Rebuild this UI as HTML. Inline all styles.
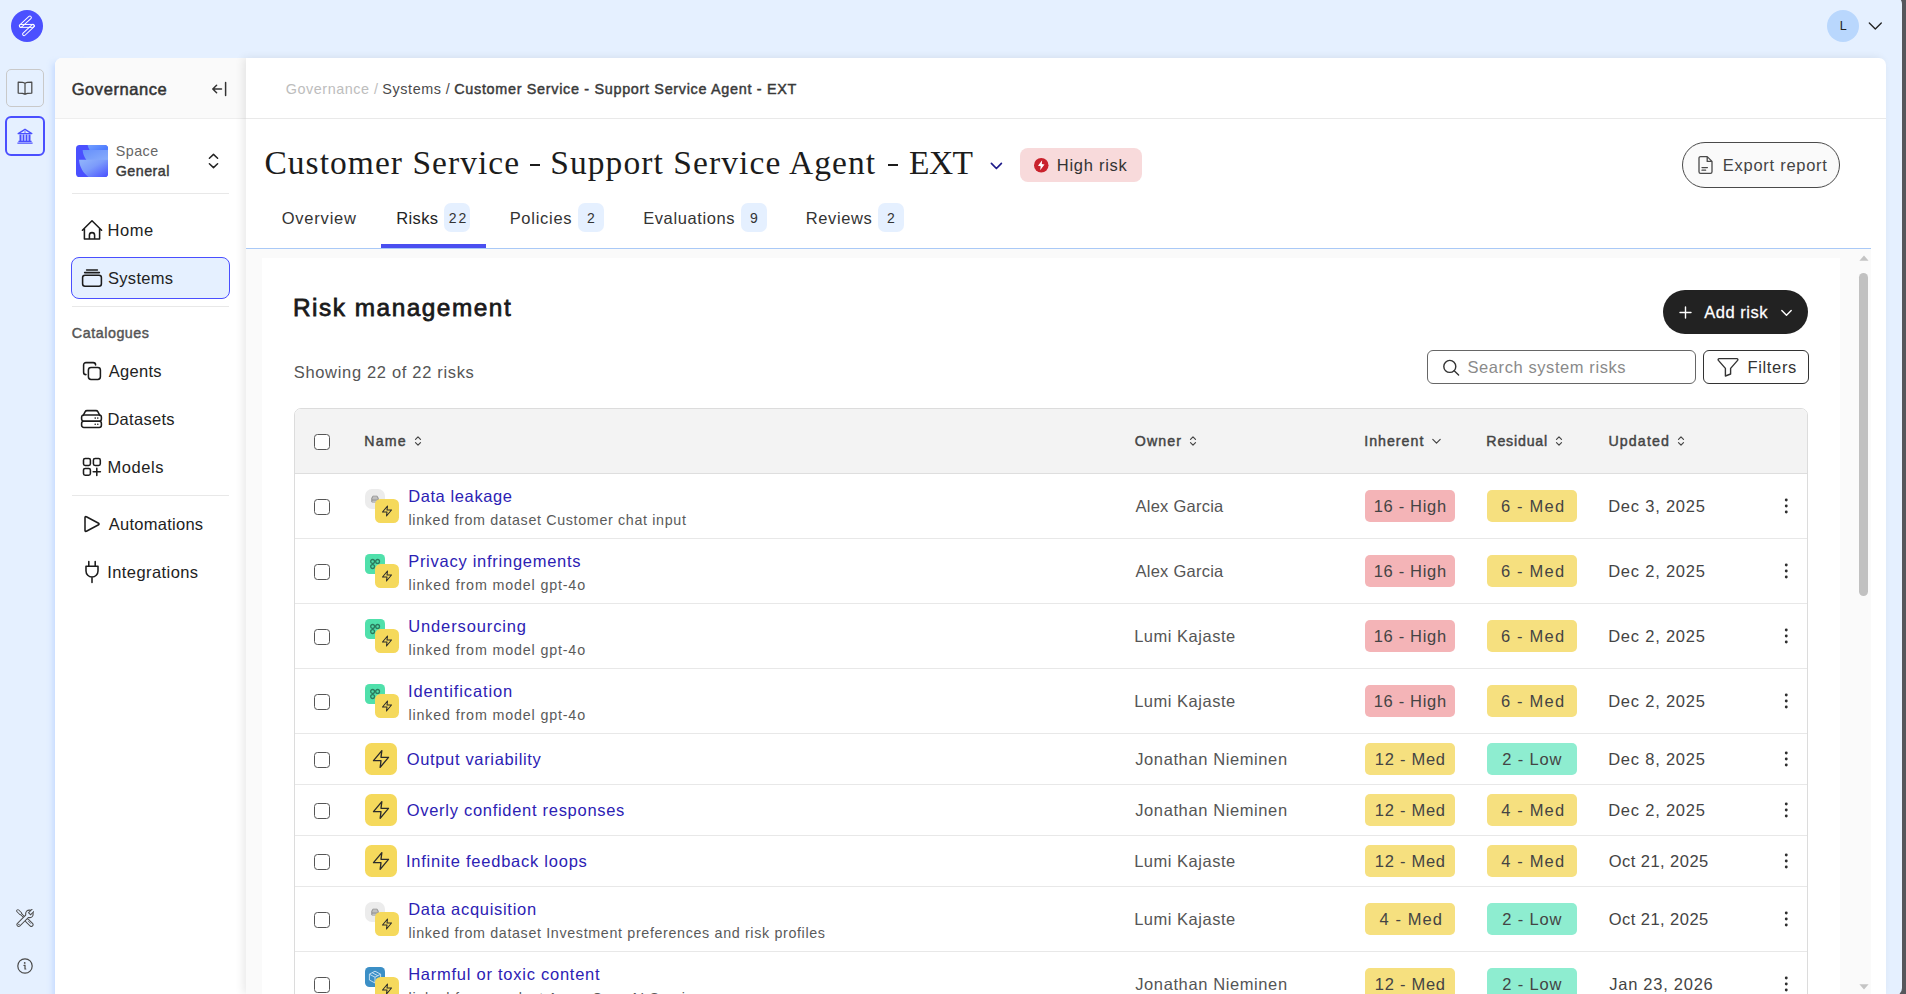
<!DOCTYPE html>
<html lang="en"><head><meta charset="utf-8"><title>Risk management</title>
<style>

html,body{margin:0;padding:0;overflow:hidden}

body{width:1906px;height:994px;overflow:hidden;position:relative;background:#e5f0ff;font-family:"Liberation Sans", sans-serif;}

div,span,svg{position:absolute;box-sizing:border-box}

.t{white-space:nowrap;line-height:1;height:1em}

.sf{font-family:"Liberation Serif", serif}

.cb{width:16px;height:16px;border:1.2px solid #555;border-radius:3.5px;background:#fff}

.hl{height:1px;background:#e8e8e8}

.bdg{height:31.3px;border-radius:5px}

.pk{background:#f4b4b7}.yl{background:#f6e07f}.gn{background:#8eedd0}

.tb{background:#e5f0ff;border-radius:7px;height:29px;width:26px;top:203px}

.yb{background:#f5d95c}

</style></head><body>
<div style="left:0;top:0;width:1906px;height:994px;overflow:hidden">
<div style="left:1886px;top:0;width:20px;height:994px;background:#56575c"></div>
<div style="left:1880px;top:-4px;width:22px;height:1000px;background:#e5f0ff;border-radius:0 8px 8px 0"></div>
<svg style="position:absolute;left:11px;top:10px" width="32" height="32" viewBox="0 0 32 32" ><circle cx="16" cy="16" r="16" fill="#4b50ff"/><rect x="17.45" y="6.05" width="15.28" height="2.90" rx="1.45" fill="none" stroke="#fff" stroke-width="1" transform="rotate(137.29 18.90 7.50)"/><rect x="8.35" y="14.45" width="15.00" height="2.90" rx="1.45" fill="none" stroke="#fff" stroke-width="1" transform="rotate(0.00 9.80 15.90)"/><rect x="20.45" y="14.45" width="15.03" height="2.90" rx="1.45" fill="none" stroke="#fff" stroke-width="1" transform="rotate(136.84 21.90 15.90)"/></svg>
<div style="left:6px;top:69px;width:38px;height:38px;border:1px solid #c9c9c9;border-radius:5px"></div>
<svg style="position:absolute;left:17px;top:80px" width="16" height="16" viewBox="0 0 16 16" ><path d="M8 3.4 C6.6 2.3 4.2 2.2 1.2 2.2 V13 C4.2 13 6.6 13.1 8 14.3 C9.4 13.1 11.8 13 14.8 13 V2.2 C11.8 2.2 9.4 2.3 8 3.4 V14.2" fill="none" stroke="#4a4a4a" stroke-width="1.25" stroke-linejoin="round"/></svg>
<div style="left:5px;top:116px;width:40px;height:40px;border:2px solid #4a4fff;border-radius:6px"></div>
<svg style="position:absolute;left:17px;top:128px" width="16" height="16" viewBox="0 0 16 16" ><path d="M8 1.3 L1.2 5.6 H14.8 Z" fill="none" stroke="#4a4fff" stroke-width="1.4" stroke-linejoin="round"/><circle cx="8" cy="4.1" r="0.75" fill="#4a4fff"/><path d="M2.5 6.6 H4.5 V13 H2.5Z M5.6 6.6 H7.4 V13 H5.6Z M8.6 6.6 H10.4 V13 H8.6Z M11.5 6.6 H13.5 V13 H11.5Z" fill="#4a4fff"/><path d="M1.4 12.8 H14.6 V14 H1.4Z M0.4 14.6 H15.6 V15.8 H0.4Z" fill="#4a4fff"/></svg>
<svg style="position:absolute;left:16px;top:909px" width="18.4" height="18.4" viewBox="0 0 18.4 18.4" ><path d="M1.9 1.9 L4.4 4.4" stroke="#4d4d4d" stroke-width="3.3" stroke-linecap="round" fill="none"/><path d="M4.4 4.4 L9 9" stroke="#4d4d4d" stroke-width="2.3" stroke-linecap="butt" fill="none"/><path d="M11.2 11.6 L15.3 15.7" stroke="#4d4d4d" stroke-width="4.5" stroke-linecap="round" fill="none"/><path d="M1.9 1.9 L4.4 4.4" stroke="#e5f0ff" stroke-width="1.5" stroke-linecap="round" fill="none"/><path d="M4.4 4.4 L9 9" stroke="#e5f0ff" stroke-width="0.7" stroke-linecap="butt" fill="none"/><path d="M11.2 11.6 L15.3 15.7" stroke="#e5f0ff" stroke-width="2.6" stroke-linecap="round" fill="none"/><path d="M12.4 12.2 L14.6 14.4" stroke="#4d4d4d" stroke-width="0.8" stroke-linecap="round" fill="none"/><path d="M2.7 15.6 L10.6 7.7" stroke="#4d4d4d" stroke-width="4.5" stroke-linecap="round" fill="none"/><circle cx="13.4" cy="4.9" r="4.3" fill="#4d4d4d"/><path d="M2.7 15.6 L12 6.3" stroke="#e5f0ff" stroke-width="2.6" stroke-linecap="round" fill="none"/><circle cx="13.4" cy="4.9" r="3.2" fill="#e5f0ff"/><path d="M13.2 5.1 L18.4 -0.1" stroke="#4d4d4d" stroke-width="3.9" stroke-linecap="butt" fill="none"/><path d="M13.9 4.4 L18.6 -0.3" stroke="#e5f0ff" stroke-width="1.9" stroke-linecap="butt" fill="none"/><circle cx="2.9" cy="15.4" r="0.7" fill="#4d4d4d"/></svg>
<svg style="position:absolute;left:17px;top:958px" width="16" height="16" viewBox="0 0 16 16" ><circle cx="8" cy="8" r="7.2" fill="none" stroke="#4a4a4a" stroke-width="1.2"/><circle cx="7.7" cy="4.9" r="0.9" fill="#4a4a4a"/><path d="M7 7.4 H8 V11 H8.8" fill="none" stroke="#4a4a4a" stroke-width="1.2" stroke-linecap="round"/></svg>
<div style="left:55px;top:63px;width:30px;height:940px;box-shadow:-2px 0 6px rgba(150,185,255,.42)"></div><div style="left:55px;top:58px;width:200px;height:936px;background:#fff;border-radius:7px 0 0 0"></div>
<div style="left:55px;top:58px;width:191px;height:60px;background:#fafafa;border-radius:7px 0 0 0"></div>
<div class="hl" style="left:55px;top:118px;width:191px;background:#eee"></div>
<svg style="position:absolute;left:211px;top:81px" width="17" height="16" viewBox="0 0 17 16" ><path d="M10.5 8 H2 M5.6 4.2 L1.8 8 L5.6 11.8 M14.6 1.4 V14.6" fill="none" stroke="#333" stroke-width="1.5" stroke-linecap="round" stroke-linejoin="round"/></svg>
<svg style="position:absolute;left:76px;top:145px" width="32" height="32" viewBox="0 0 32 32" ><defs><linearGradient id="g1" x1="0" y1="0" x2="1" y2="0.4"><stop offset="0" stop-color="#74a0ff"/><stop offset="1" stop-color="#4f7dff"/></linearGradient><linearGradient id="g2" x1="0" y1="0" x2="1" y2="1"><stop offset="0" stop-color="#6790fb"/><stop offset="1" stop-color="#88acfb"/></linearGradient><linearGradient id="g3" x1="0" y1="0" x2="1" y2="1"><stop offset="0" stop-color="#92b6fb"/><stop offset="0.45" stop-color="#7c9bfb"/><stop offset="1" stop-color="#4850ff"/></linearGradient><clipPath id="sc"><rect width="32" height="32" rx="3.6"/></clipPath></defs><g clip-path="url(#sc)"><rect width="32" height="32" fill="#4a50ff"/><path d="M11.6 0 H32 V5 H13.6 C12.6 3.4 12 1.8 11.6 0Z" fill="url(#g1)"/><path d="M6.6 4.9 H32 V14.9 H10.4 C8.2 12 6.9 8.6 6.6 4.9Z" fill="url(#g2)"/><path d="M3 14.8 H32 V32 H12.4 C7 28 3.6 22 3 14.8Z" fill="url(#g3)"/></g></svg>
<svg style="position:absolute;left:208px;top:153px" width="11" height="16" viewBox="0 0 11 16" ><path d="M1.4 5.2 L5.5 1.4 L9.6 5.2 M1.4 10.8 L5.5 14.6 L9.6 10.8" fill="none" stroke="#222" stroke-width="1.5" stroke-linecap="round" stroke-linejoin="round"/></svg>
<div class="hl" style="left:72px;top:193px;width:157px"></div>
<svg style="position:absolute;left:81px;top:219px" width="22" height="22" viewBox="0 0 22 22" ><path d="M1.4 11.2 L11 1.8 L20.6 11.2 M3.4 9.6 V20 H18.6 V9.6 M8.4 20 V16.2 A2.6 2.6 0 0 1 13.6 16.2 V20" fill="none" stroke="#1c1c1c" stroke-width="1.55" stroke-linecap="round" stroke-linejoin="round"/></svg>
<div style="left:71px;top:257px;width:159px;height:42px;background:#e5f0ff;border:1px solid #4a4fff;border-radius:8px"></div>
<svg style="position:absolute;left:81px;top:268px" width="22" height="20" viewBox="0 0 22 20" ><rect x="1.6" y="7.2" width="18.8" height="11" rx="2.4" fill="none" stroke="#1c1c1c" stroke-width="1.55" stroke-linecap="round" stroke-linejoin="round"/><path d="M3.6 4.6 H18.4 M5.6 1.9 H16.4" fill="none" stroke="#1c1c1c" stroke-width="1.55" stroke-linecap="round" stroke-linejoin="round"/></svg>
<div class="hl" style="left:72px;top:306px;width:157px"></div>
<svg style="position:absolute;left:82px;top:361px" width="20" height="20" viewBox="0 0 20 20" ><rect x="6.4" y="6.4" width="12" height="12" rx="2.6" fill="none" stroke="#1c1c1c" stroke-width="1.55" stroke-linecap="round" stroke-linejoin="round"/><path d="M4 13.6 A2.4 2.4 0 0 1 1.6 11.2 V4 A2.4 2.4 0 0 1 4 1.6 H11.2 A2.4 2.4 0 0 1 13.6 4" fill="none" stroke="#1c1c1c" stroke-width="1.55" stroke-linecap="round" stroke-linejoin="round"/></svg>
<svg style="position:absolute;left:80px;top:409px" width="23" height="20" viewBox="0 0 23 20" ><rect x="1.6" y="6" width="19.8" height="6.2" rx="2.2" fill="none" stroke="#1c1c1c" stroke-width="1.55" stroke-linecap="round" stroke-linejoin="round"/><rect x="1.6" y="12.2" width="19.8" height="6.2" rx="2.2" fill="none" stroke="#1c1c1c" stroke-width="1.55" stroke-linecap="round" stroke-linejoin="round"/><path d="M3.2 6.4 L5.2 2.6 C5.6 1.8 6.2 1.6 7 1.6 H16 C16.8 1.6 17.4 1.8 17.8 2.6 L19.8 6.4" fill="none" stroke="#1c1c1c" stroke-width="1.55" stroke-linecap="round" stroke-linejoin="round"/><circle cx="15.2" cy="9.1" r="0.8" fill="#1c1c1c"/><circle cx="17.8" cy="9.1" r="0.8" fill="#1c1c1c"/><circle cx="15.2" cy="15.3" r="0.8" fill="#1c1c1c"/><circle cx="17.8" cy="15.3" r="0.8" fill="#1c1c1c"/></svg>
<svg style="position:absolute;left:82px;top:457px" width="20" height="20" viewBox="0 0 20 20" ><rect x="1.5" y="1.5" width="6.9" height="6.9" rx="1.7" fill="none" stroke="#1c1c1c" stroke-width="1.55" stroke-linecap="round" stroke-linejoin="round"/><rect x="11.4" y="1.5" width="6.9" height="6.9" rx="1.7" fill="none" stroke="#1c1c1c" stroke-width="1.55" stroke-linecap="round" stroke-linejoin="round"/><rect x="1.5" y="11.4" width="6.9" height="6.9" rx="1.7" fill="none" stroke="#1c1c1c" stroke-width="1.55" stroke-linecap="round" stroke-linejoin="round"/><path d="M14.8 11.2 V18.4 M11.2 14.8 H18.4" fill="none" stroke="#1c1c1c" stroke-width="1.55" stroke-linecap="round" stroke-linejoin="round"/></svg>
<div class="hl" style="left:72px;top:495px;width:157px"></div>
<svg style="position:absolute;left:83px;top:515px" width="18" height="18" viewBox="0 0 18 18" ><path d="M2 2.6 C2 1.8 2.8 1.4 3.4 1.8 L15.6 8.2 C16.2 8.6 16.2 9.4 15.6 9.8 L3.4 16.2 C2.8 16.6 2 16.2 2 15.4 Z" fill="none" stroke="#1c1c1c" stroke-width="1.55" stroke-linecap="round" stroke-linejoin="round"/></svg>
<svg style="position:absolute;left:84px;top:560px" width="16" height="24" viewBox="0 0 16 24" ><path d="M4.8 1.4 V6.2 M11.2 1.4 V6.2 M2 6.2 H14 V11 A6 6 0 0 1 2 11 Z M8 17 V22.4" fill="none" stroke="#1c1c1c" stroke-width="1.55" stroke-linecap="round" stroke-linejoin="round"/></svg>
<div style="left:246px;top:58px;width:1640px;height:936px;background:#fff;border-radius:0 7px 0 0;box-shadow:-3px 0 8px rgba(0,0,0,.085)"></div>
<div class="hl" style="left:246px;top:118px;width:1640px;background:#e9e9e9"></div>
<div style="left:529.5px;top:164.3px;width:10.5px;height:1.5px;background:#1c1c1c"></div><div style="left:887.5px;top:164.3px;width:10.5px;height:1.5px;background:#1c1c1c"></div>
<svg style="position:absolute;left:989px;top:160px" width="16" height="12" viewBox="0 0 16 12" ><path d="M2.4 3.4 L7.4 8.5 L12.4 3.4" fill="none" stroke="#1e1b8a" stroke-width="1.7" stroke-linecap="round" stroke-linejoin="round"/></svg>
<div style="left:1020px;top:148px;width:122px;height:34px;background:#f8dadb;border-radius:8px"></div>
<svg style="position:absolute;left:1034px;top:158px" width="14.5" height="14.5" viewBox="0 0 16 16" ><circle cx="8" cy="8" r="8" fill="#c9222c"/><path d="M9 2.6 L4.4 8.6 L7.4 9.2 L6.8 13.4 L11.6 7.2 L8.6 6.6 Z" fill="#fff"/></svg>
<div style="left:1682px;top:142px;width:158px;height:46px;background:#fafafa;border:1px solid #4a4a4a;border-radius:23px"></div>
<svg style="position:absolute;left:1697px;top:155px" width="17" height="20" viewBox="0 0 17 20" ><path d="M10.2 1.6 H3.6 A1.6 1.6 0 0 0 2 3.2 V16.8 A1.6 1.6 0 0 0 3.6 18.4 H13.4 A1.6 1.6 0 0 0 15 16.8 V6.4 Z M10.2 1.6 V6.4 H15 M5 12.6 H10.4 M5 15.2 H8.6" fill="none" stroke="#4a4a4a" stroke-width="1.3" stroke-linejoin="round" stroke-linecap="round"/></svg>
<div class="tb" style="left:444px"></div>
<div class="tb" style="left:578px"></div>
<div class="tb" style="left:741px"></div>
<div class="tb" style="left:878px"></div>
<div style="left:246px;top:248px;width:1625px;height:1px;background:#a9c9f7"></div>
<div style="left:381px;top:244px;width:105px;height:4px;background:#4a4ff0"></div>
<div style="left:246px;top:249px;width:1625px;height:745px;background:#fafafa"></div>
<div style="left:262px;top:258px;width:1578px;height:736px;background:#fff"></div>
<svg style="position:absolute;left:1859px;top:255px" width="10" height="6" viewBox="0 0 10 6" ><path d="M5 0.4 L9.6 5.8 H0.4 Z" fill="#c4c4c4"/></svg>
<div style="left:1859px;top:273px;width:9px;height:323px;background:#c1c1c1;border-radius:4.5px"></div>
<svg style="position:absolute;left:1859px;top:984px" width="10" height="6" viewBox="0 0 10 6" ><path d="M0.4 0.2 H9.6 L5 5.6 Z" fill="#c4c4c4"/></svg>
<div style="left:1827px;top:10px;width:32.4px;height:32px;border-radius:16.2px;background:#b9d7fd"></div>
<svg style="position:absolute;left:1868px;top:21px" width="15" height="10" viewBox="0 0 15 10" ><path d="M1.3 2 L7.3 8 L13.3 2" fill="none" stroke="#222" stroke-width="1.3" stroke-linecap="round" stroke-linejoin="round"/></svg>
<div style="left:1663px;top:290px;width:145px;height:44px;background:#222;border-radius:22px"></div>
<svg style="position:absolute;left:1679px;top:306px" width="13" height="13" viewBox="0 0 13 13" ><path d="M6.5 1 V12 M1 6.5 H12" fill="none" stroke="#fff" stroke-width="1.4" stroke-linecap="round"/></svg>
<svg style="position:absolute;left:1780px;top:308px" width="13" height="10" viewBox="0 0 13 10" ><path d="M1.8 2.4 L6.5 7.2 L11.2 2.4" fill="none" stroke="#fff" stroke-width="1.4" stroke-linecap="round" stroke-linejoin="round"/></svg>
<div style="left:1427px;top:350px;width:269px;height:34px;border:1px solid #666;border-radius:6px;background:#fff"></div>
<svg style="position:absolute;left:1442px;top:359px" width="18" height="17" viewBox="0 0 18 17" ><circle cx="7.8" cy="7.4" r="6" fill="none" stroke="#333" stroke-width="1.4"/><path d="M12.2 11.8 L16.6 16" stroke="#333" stroke-width="1.4" stroke-linecap="round"/></svg>
<div style="left:1703px;top:350px;width:106px;height:34px;border:1px solid #333;border-radius:6px;background:#fff"></div>
<svg style="position:absolute;left:1717px;top:357px" width="22" height="20" viewBox="0 0 22 20" ><path d="M2.2 1.6 H19.8 C20.8 1.6 21.2 2.6 20.6 3.4 L13.6 11.4 V17 L8.4 19 V11.4 L1.4 3.4 C0.8 2.6 1.2 1.6 2.2 1.6Z" fill="none" stroke="#333" stroke-width="1.4" stroke-linejoin="round"/></svg>
<div style="left:294px;top:408px;width:1514px;height:600px;border:1px solid #dcdcdc;border-radius:7px 7px 0 0;background:#fff"></div>
<div style="left:295px;top:409px;width:1512px;height:64px;background:#f3f3f3;border-radius:6px 6px 0 0"></div>
<div class="hl" style="left:295px;top:473px;width:1512px;background:#dedede"></div>
<div class="cb" style="left:314px;top:434px"></div>
<svg style="position:absolute;left:414.3px;top:435.2px" width="8" height="12" viewBox="0 0 8 12" ><path d="M1.5 4.3 L4 1.8 L6.5 4.3 M1.5 7.7 L4 10.2 L6.5 7.7" fill="none" stroke="#444" stroke-width="1.2" stroke-linecap="round" stroke-linejoin="round"/></svg>
<svg style="position:absolute;left:1189.2px;top:435.2px" width="8" height="12" viewBox="0 0 8 12" ><path d="M1.5 4.3 L4 1.8 L6.5 4.3 M1.5 7.7 L4 10.2 L6.5 7.7" fill="none" stroke="#444" stroke-width="1.2" stroke-linecap="round" stroke-linejoin="round"/></svg>
<svg style="position:absolute;left:1555.4px;top:435.2px" width="8" height="12" viewBox="0 0 8 12" ><path d="M1.5 4.3 L4 1.8 L6.5 4.3 M1.5 7.7 L4 10.2 L6.5 7.7" fill="none" stroke="#444" stroke-width="1.2" stroke-linecap="round" stroke-linejoin="round"/></svg>
<svg style="position:absolute;left:1677.2px;top:435.2px" width="8" height="12" viewBox="0 0 8 12" ><path d="M1.5 4.3 L4 1.8 L6.5 4.3 M1.5 7.7 L4 10.2 L6.5 7.7" fill="none" stroke="#444" stroke-width="1.2" stroke-linecap="round" stroke-linejoin="round"/></svg>
<svg style="position:absolute;left:1431px;top:437px" width="11" height="9" viewBox="0 0 11 9" ><path d="M1.8 2.4 L5.5 6.2 L9.2 2.4" fill="none" stroke="#444" stroke-width="1.2" stroke-linecap="round" stroke-linejoin="round"/></svg>
<div class="hl" style="left:295px;top:538px;width:1512px"></div>
<div class="cb" style="left:314px;top:499px"></div>
<div style="left:365px;top:489px;width:20px;height:20px;border-radius:7px;background:#ececec"></div>
<svg style="position:absolute;left:371px;top:495px" width="8" height="8" viewBox="0 0 8 8" ><path d="M1 3 L1.8 1.2 H6.2 L7 3 M0.8 3 H7.2 V5 H0.8Z M0.8 5 H7.2 V7 H0.8Z" fill="none" stroke="#8a8a8a" stroke-width="0.9" stroke-linejoin="round"/></svg>
<div class="yb" style="left:375px;top:499px;width:24px;height:24px;border-radius:5.5px"></div>
<svg style="position:absolute;left:381.1px;top:504.9px" width="12" height="12" viewBox="0 0 24 24" ><path d="M13 2 L3 14 H12 L11 22 L21 10 H12 Z" fill="none" stroke="#2b2b2b" stroke-width="2.1" stroke-linejoin="round" stroke-linecap="round"/></svg>
<div class="bdg pk" style="left:1365px;top:490.45px;width:90px"></div>
<div class="bdg yl" style="left:1487px;top:490.45px;width:90px"></div>
<svg style="position:absolute;left:1783px;top:497.25px" width="6.5" height="18" viewBox="0 0 6.5 18" ><circle cx="3.25" cy="3" r="1.45" fill="#2e2e2e"/><circle cx="3.25" cy="9" r="1.45" fill="#2e2e2e"/><circle cx="3.25" cy="15" r="1.45" fill="#2e2e2e"/></svg>
<div class="hl" style="left:295px;top:603px;width:1512px"></div>
<div class="cb" style="left:314px;top:564px"></div>
<div style="left:365px;top:554px;width:20px;height:20px;border-radius:4.5px;background:#50e0ab"></div>
<svg style="position:absolute;left:369px;top:558px" width="12" height="12" viewBox="0 0 12 12" ><g fill="none" stroke="#2b7a5d" stroke-width="1.3"><circle cx="3.6" cy="3.4" r="1.9"/><circle cx="8.6" cy="3.4" r="1.9"/><circle cx="3.6" cy="8.6" r="1.9"/><path d="M5.5 3.4 H6.7 M3.6 5.3 V6.7"/></g></svg>
<div class="yb" style="left:375px;top:564px;width:24px;height:24px;border-radius:5.5px"></div>
<svg style="position:absolute;left:381.1px;top:569.9px" width="12" height="12" viewBox="0 0 24 24" ><path d="M13 2 L3 14 H12 L11 22 L21 10 H12 Z" fill="none" stroke="#2b2b2b" stroke-width="2.1" stroke-linejoin="round" stroke-linecap="round"/></svg>
<div class="bdg pk" style="left:1365px;top:555.45px;width:90px"></div>
<div class="bdg yl" style="left:1487px;top:555.45px;width:90px"></div>
<svg style="position:absolute;left:1783px;top:562.25px" width="6.5" height="18" viewBox="0 0 6.5 18" ><circle cx="3.25" cy="3" r="1.45" fill="#2e2e2e"/><circle cx="3.25" cy="9" r="1.45" fill="#2e2e2e"/><circle cx="3.25" cy="15" r="1.45" fill="#2e2e2e"/></svg>
<div class="hl" style="left:295px;top:668px;width:1512px"></div>
<div class="cb" style="left:314px;top:629px"></div>
<div style="left:365px;top:619px;width:20px;height:20px;border-radius:4.5px;background:#50e0ab"></div>
<svg style="position:absolute;left:369px;top:623px" width="12" height="12" viewBox="0 0 12 12" ><g fill="none" stroke="#2b7a5d" stroke-width="1.3"><circle cx="3.6" cy="3.4" r="1.9"/><circle cx="8.6" cy="3.4" r="1.9"/><circle cx="3.6" cy="8.6" r="1.9"/><path d="M5.5 3.4 H6.7 M3.6 5.3 V6.7"/></g></svg>
<div class="yb" style="left:375px;top:629px;width:24px;height:24px;border-radius:5.5px"></div>
<svg style="position:absolute;left:381.1px;top:634.9px" width="12" height="12" viewBox="0 0 24 24" ><path d="M13 2 L3 14 H12 L11 22 L21 10 H12 Z" fill="none" stroke="#2b2b2b" stroke-width="2.1" stroke-linejoin="round" stroke-linecap="round"/></svg>
<div class="bdg pk" style="left:1365px;top:620.45px;width:90px"></div>
<div class="bdg yl" style="left:1487px;top:620.45px;width:90px"></div>
<svg style="position:absolute;left:1783px;top:627.25px" width="6.5" height="18" viewBox="0 0 6.5 18" ><circle cx="3.25" cy="3" r="1.45" fill="#2e2e2e"/><circle cx="3.25" cy="9" r="1.45" fill="#2e2e2e"/><circle cx="3.25" cy="15" r="1.45" fill="#2e2e2e"/></svg>
<div class="hl" style="left:295px;top:733px;width:1512px"></div>
<div class="cb" style="left:314px;top:694px"></div>
<div style="left:365px;top:684px;width:20px;height:20px;border-radius:4.5px;background:#50e0ab"></div>
<svg style="position:absolute;left:369px;top:688px" width="12" height="12" viewBox="0 0 12 12" ><g fill="none" stroke="#2b7a5d" stroke-width="1.3"><circle cx="3.6" cy="3.4" r="1.9"/><circle cx="8.6" cy="3.4" r="1.9"/><circle cx="3.6" cy="8.6" r="1.9"/><path d="M5.5 3.4 H6.7 M3.6 5.3 V6.7"/></g></svg>
<div class="yb" style="left:375px;top:694px;width:24px;height:24px;border-radius:5.5px"></div>
<svg style="position:absolute;left:381.1px;top:699.9px" width="12" height="12" viewBox="0 0 24 24" ><path d="M13 2 L3 14 H12 L11 22 L21 10 H12 Z" fill="none" stroke="#2b2b2b" stroke-width="2.1" stroke-linejoin="round" stroke-linecap="round"/></svg>
<div class="bdg pk" style="left:1365px;top:685.45px;width:90px"></div>
<div class="bdg yl" style="left:1487px;top:685.45px;width:90px"></div>
<svg style="position:absolute;left:1783px;top:692.25px" width="6.5" height="18" viewBox="0 0 6.5 18" ><circle cx="3.25" cy="3" r="1.45" fill="#2e2e2e"/><circle cx="3.25" cy="9" r="1.45" fill="#2e2e2e"/><circle cx="3.25" cy="15" r="1.45" fill="#2e2e2e"/></svg>
<div class="hl" style="left:295px;top:784px;width:1512px"></div>
<div class="cb" style="left:314px;top:752px"></div>
<div class="yb" style="left:365px;top:743px;width:32px;height:32px;border-radius:6.5px"></div>
<svg style="position:absolute;left:371px;top:749px" width="20" height="20" viewBox="0 0 24 24" ><path d="M13 2 L3 14 H12 L11 22 L21 10 H12 Z" fill="none" stroke="#2b2b2b" stroke-width="1.6" stroke-linejoin="round" stroke-linecap="round"/></svg>
<div class="bdg yl" style="left:1365px;top:743.45px;width:90px"></div>
<div class="bdg gn" style="left:1487px;top:743.45px;width:90px"></div>
<svg style="position:absolute;left:1783px;top:750.25px" width="6.5" height="18" viewBox="0 0 6.5 18" ><circle cx="3.25" cy="3" r="1.45" fill="#2e2e2e"/><circle cx="3.25" cy="9" r="1.45" fill="#2e2e2e"/><circle cx="3.25" cy="15" r="1.45" fill="#2e2e2e"/></svg>
<div class="hl" style="left:295px;top:835px;width:1512px"></div>
<div class="cb" style="left:314px;top:803px"></div>
<div class="yb" style="left:365px;top:794px;width:32px;height:32px;border-radius:6.5px"></div>
<svg style="position:absolute;left:371px;top:800px" width="20" height="20" viewBox="0 0 24 24" ><path d="M13 2 L3 14 H12 L11 22 L21 10 H12 Z" fill="none" stroke="#2b2b2b" stroke-width="1.6" stroke-linejoin="round" stroke-linecap="round"/></svg>
<div class="bdg yl" style="left:1365px;top:794.45px;width:90px"></div>
<div class="bdg yl" style="left:1487px;top:794.45px;width:90px"></div>
<svg style="position:absolute;left:1783px;top:801.25px" width="6.5" height="18" viewBox="0 0 6.5 18" ><circle cx="3.25" cy="3" r="1.45" fill="#2e2e2e"/><circle cx="3.25" cy="9" r="1.45" fill="#2e2e2e"/><circle cx="3.25" cy="15" r="1.45" fill="#2e2e2e"/></svg>
<div class="hl" style="left:295px;top:886px;width:1512px"></div>
<div class="cb" style="left:314px;top:854px"></div>
<div class="yb" style="left:365px;top:845px;width:32px;height:32px;border-radius:6.5px"></div>
<svg style="position:absolute;left:371px;top:851px" width="20" height="20" viewBox="0 0 24 24" ><path d="M13 2 L3 14 H12 L11 22 L21 10 H12 Z" fill="none" stroke="#2b2b2b" stroke-width="1.6" stroke-linejoin="round" stroke-linecap="round"/></svg>
<div class="bdg yl" style="left:1365px;top:845.45px;width:90px"></div>
<div class="bdg yl" style="left:1487px;top:845.45px;width:90px"></div>
<svg style="position:absolute;left:1783px;top:852.25px" width="6.5" height="18" viewBox="0 0 6.5 18" ><circle cx="3.25" cy="3" r="1.45" fill="#2e2e2e"/><circle cx="3.25" cy="9" r="1.45" fill="#2e2e2e"/><circle cx="3.25" cy="15" r="1.45" fill="#2e2e2e"/></svg>
<div class="hl" style="left:295px;top:951px;width:1512px"></div>
<div class="cb" style="left:314px;top:912px"></div>
<div style="left:365px;top:902px;width:20px;height:20px;border-radius:7px;background:#ececec"></div>
<svg style="position:absolute;left:371px;top:908px" width="8" height="8" viewBox="0 0 8 8" ><path d="M1 3 L1.8 1.2 H6.2 L7 3 M0.8 3 H7.2 V5 H0.8Z M0.8 5 H7.2 V7 H0.8Z" fill="none" stroke="#8a8a8a" stroke-width="0.9" stroke-linejoin="round"/></svg>
<div class="yb" style="left:375px;top:912px;width:24px;height:24px;border-radius:5.5px"></div>
<svg style="position:absolute;left:381.1px;top:917.9px" width="12" height="12" viewBox="0 0 24 24" ><path d="M13 2 L3 14 H12 L11 22 L21 10 H12 Z" fill="none" stroke="#2b2b2b" stroke-width="2.1" stroke-linejoin="round" stroke-linecap="round"/></svg>
<div class="bdg yl" style="left:1365px;top:903.45px;width:90px"></div>
<div class="bdg gn" style="left:1487px;top:903.45px;width:90px"></div>
<svg style="position:absolute;left:1783px;top:910.25px" width="6.5" height="18" viewBox="0 0 6.5 18" ><circle cx="3.25" cy="3" r="1.45" fill="#2e2e2e"/><circle cx="3.25" cy="9" r="1.45" fill="#2e2e2e"/><circle cx="3.25" cy="15" r="1.45" fill="#2e2e2e"/></svg>
<div class="hl" style="left:295px;top:1016px;width:1512px"></div>
<div class="cb" style="left:314px;top:977px"></div>
<div style="left:365px;top:967px;width:20px;height:20px;border-radius:4.5px;background:#3b8fc6"></div>
<svg style="position:absolute;left:368px;top:970px" width="14" height="14" viewBox="0 0 14 14" ><path d="M7 1.2 L12.6 4.2 V10 L7 13 L1.4 10 V4.2 Z M1.4 4.2 L7 7.2 L12.6 4.2 M7 7.2 V13 M4.2 2.7 L9.8 5.7" fill="none" stroke="#cfe4f4" stroke-width="0.9" stroke-linejoin="round"/></svg>
<div class="yb" style="left:375px;top:977px;width:24px;height:24px;border-radius:5.5px"></div>
<svg style="position:absolute;left:381.1px;top:982.9px" width="12" height="12" viewBox="0 0 24 24" ><path d="M13 2 L3 14 H12 L11 22 L21 10 H12 Z" fill="none" stroke="#2b2b2b" stroke-width="2.1" stroke-linejoin="round" stroke-linecap="round"/></svg>
<div class="bdg yl" style="left:1365px;top:968.45px;width:90px"></div>
<div class="bdg gn" style="left:1487px;top:968.45px;width:90px"></div>
<svg style="position:absolute;left:1783px;top:975.25px" width="6.5" height="18" viewBox="0 0 6.5 18" ><circle cx="3.25" cy="3" r="1.45" fill="#2e2e2e"/><circle cx="3.25" cy="9" r="1.45" fill="#2e2e2e"/><circle cx="3.25" cy="15" r="1.45" fill="#2e2e2e"/></svg>
<span class="t" style="left:71.67px;top:81.03px;font-size:16.5px;color:#333;-webkit-text-stroke:0.51px #333;letter-spacing:0.575px;">Governance</span>
<span class="t" style="left:115.85px;top:143.90px;font-size:14.3px;color:#666;letter-spacing:0.434px;">Space</span>
<span class="t" style="left:115.78px;top:163.80px;font-size:14.3px;color:#3a3a3a;-webkit-text-stroke:0.44px #3a3a3a;letter-spacing:0.467px;">General</span>
<span class="t" style="left:107.40px;top:222.03px;font-size:16.5px;color:#222;letter-spacing:0.607px;">Home</span>
<span class="t" style="left:108.00px;top:269.78px;font-size:16.5px;color:#222;letter-spacing:0.305px;">Systems</span>
<span class="t" style="left:71.87px;top:325.70px;font-size:14.3px;color:#555;-webkit-text-stroke:0.44px #555;letter-spacing:0.533px;">Catalogues</span>
<span class="t" style="left:108.72px;top:363.03px;font-size:16.5px;color:#222;letter-spacing:0.301px;">Agents</span>
<span class="t" style="left:107.40px;top:410.78px;font-size:16.5px;color:#222;letter-spacing:0.296px;">Datasets</span>
<span class="t" style="left:107.40px;top:459.03px;font-size:16.5px;color:#222;letter-spacing:0.599px;">Models</span>
<span class="t" style="left:108.72px;top:515.78px;font-size:16.5px;color:#222;letter-spacing:0.266px;">Automations</span>
<span class="t" style="left:107.23px;top:563.53px;font-size:16.5px;color:#222;letter-spacing:0.421px;">Integrations</span>
<span class="t" style="left:285.78px;top:81.81px;font-size:14.4px;color:#bdbdbd;letter-spacing:0.551px;">Governance</span>
<span class="t" style="left:373.88px;top:81.81px;font-size:14.4px;color:#bdbdbd;">/</span>
<span class="t" style="left:382.35px;top:81.81px;font-size:14.4px;color:#4a4a4a;letter-spacing:0.581px;">Systems</span>
<span class="t" style="left:445.75px;top:81.81px;font-size:14.4px;color:#4a4a4a;">/</span>
<span class="t" style="left:454.27px;top:81.81px;font-size:14.4px;color:#3a3a3a;-webkit-text-stroke:0.45px #3a3a3a;letter-spacing:0.687px;">Customer Service - Support Service Agent - EXT</span>
<span class="t sf" style="left:264.38px;top:146.44px;font-size:33.5px;color:#1c1c1c;letter-spacing:1.045px;">Customer Service</span>
<span class="t sf" style="left:550.26px;top:146.44px;font-size:33.5px;color:#1c1c1c;letter-spacing:1.080px;">Support Service Agent</span>
<span class="t sf" style="left:909.03px;top:146.44px;font-size:33.5px;color:#1c1c1c;letter-spacing:-0.552px;">EXT</span>
<span class="t" style="left:281.72px;top:210.28px;font-size:16.5px;color:#333;letter-spacing:0.782px;">Overview</span>
<span class="t" style="left:396.15px;top:210.28px;font-size:16.5px;color:#222;letter-spacing:0.401px;">Risks</span>
<span class="t" style="left:448.80px;top:211.15px;font-size:14px;color:#333;letter-spacing:1.830px;">22</span>
<span class="t" style="left:509.65px;top:210.28px;font-size:16.5px;color:#333;letter-spacing:0.727px;">Policies</span>
<span class="t" style="left:587.10px;top:211.15px;font-size:14px;color:#333;">2</span>
<span class="t" style="left:643.15px;top:210.28px;font-size:16.5px;color:#333;letter-spacing:0.614px;">Evaluations</span>
<span class="t" style="left:750.10px;top:211.15px;font-size:14px;color:#333;">9</span>
<span class="t" style="left:805.65px;top:210.28px;font-size:16.5px;color:#333;letter-spacing:0.640px;">Reviews</span>
<span class="t" style="left:887.10px;top:211.15px;font-size:14px;color:#333;">2</span>
<span class="t" style="left:1056.85px;top:157.28px;font-size:16.5px;color:#333;letter-spacing:0.718px;">High risk</span>
<span class="t" style="left:1722.85px;top:157.28px;font-size:16.5px;color:#444;letter-spacing:0.725px;">Export report</span>
<span class="t" style="left:293.00px;top:295.60px;font-size:24.4px;color:#1a1a1a;-webkit-text-stroke:0.76px #1a1a1a;letter-spacing:1.507px;">Risk management</span>
<span class="t" style="left:293.75px;top:364.28px;font-size:16.5px;color:#555;letter-spacing:0.670px;">Showing 22 of 22 risks</span>
<span class="t" style="left:1704.22px;top:304.03px;font-size:16.5px;color:#fff;-webkit-text-stroke:0.26px #fff;letter-spacing:0.521px;">Add risk</span>
<span class="t" style="left:1467.50px;top:358.83px;font-size:16.5px;color:#8a8a8a;letter-spacing:0.582px;">Search system risks</span>
<span class="t" style="left:1747.40px;top:358.83px;font-size:16.5px;color:#333;letter-spacing:0.671px;">Filters</span>
<span class="t" style="left:1839.77px;top:19.72px;font-size:12.5px;color:#222;">L</span>
<span class="t" style="left:364.34px;top:433.98px;font-size:14.2px;color:#444;-webkit-text-stroke:0.44px #444;letter-spacing:1.145px;">Name</span>
<span class="t" style="left:1134.83px;top:433.98px;font-size:14.2px;color:#444;-webkit-text-stroke:0.44px #444;letter-spacing:1.090px;">Owner</span>
<span class="t" style="left:1364.19px;top:433.98px;font-size:14.2px;color:#444;-webkit-text-stroke:0.44px #444;letter-spacing:1.015px;">Inherent</span>
<span class="t" style="left:1486.34px;top:433.98px;font-size:14.2px;color:#444;-webkit-text-stroke:0.44px #444;letter-spacing:0.807px;">Residual</span>
<span class="t" style="left:1608.40px;top:433.98px;font-size:14.2px;color:#444;-webkit-text-stroke:0.44px #444;letter-spacing:1.145px;">Updated</span>
<span class="t" style="left:408.15px;top:488.03px;font-size:16.5px;color:#2c21b4;letter-spacing:0.599px;">Data leakage</span>
<span class="t" style="left:408.54px;top:512.80px;font-size:14.3px;color:#5a5a5a;letter-spacing:0.648px;">linked from dataset Customer chat input</span>
<span class="t" style="left:1135.47px;top:498.08px;font-size:16.5px;color:#555;letter-spacing:0.250px;">Alex Garcia</span>
<span class="t" style="left:1373.74px;top:498.08px;font-size:16.5px;color:#444;letter-spacing:0.672px;">16 - High</span>
<span class="t" style="left:1500.91px;top:498.08px;font-size:16.5px;color:#444;letter-spacing:1.202px;">6 - Med</span>
<span class="t" style="left:1608.15px;top:498.08px;font-size:16.5px;color:#444;letter-spacing:0.781px;">Dec 3, 2025</span>
<span class="t" style="left:408.15px;top:553.03px;font-size:16.5px;color:#2c21b4;letter-spacing:0.736px;">Privacy infringements</span>
<span class="t" style="left:408.54px;top:577.80px;font-size:14.3px;color:#5a5a5a;letter-spacing:0.836px;">linked from model gpt-4o</span>
<span class="t" style="left:1135.47px;top:563.08px;font-size:16.5px;color:#555;letter-spacing:0.250px;">Alex Garcia</span>
<span class="t" style="left:1373.74px;top:563.08px;font-size:16.5px;color:#444;letter-spacing:0.672px;">16 - High</span>
<span class="t" style="left:1500.91px;top:563.08px;font-size:16.5px;color:#444;letter-spacing:1.202px;">6 - Med</span>
<span class="t" style="left:1608.15px;top:563.08px;font-size:16.5px;color:#444;letter-spacing:0.781px;">Dec 2, 2025</span>
<span class="t" style="left:408.23px;top:618.03px;font-size:16.5px;color:#2c21b4;letter-spacing:0.877px;">Undersourcing</span>
<span class="t" style="left:408.54px;top:642.80px;font-size:14.3px;color:#5a5a5a;letter-spacing:0.836px;">linked from model gpt-4o</span>
<span class="t" style="left:1134.15px;top:628.08px;font-size:16.5px;color:#555;letter-spacing:0.518px;">Lumi Kajaste</span>
<span class="t" style="left:1373.74px;top:628.08px;font-size:16.5px;color:#444;letter-spacing:0.672px;">16 - High</span>
<span class="t" style="left:1500.91px;top:628.08px;font-size:16.5px;color:#444;letter-spacing:1.202px;">6 - Med</span>
<span class="t" style="left:1608.15px;top:628.08px;font-size:16.5px;color:#444;letter-spacing:0.781px;">Dec 2, 2025</span>
<span class="t" style="left:407.98px;top:683.03px;font-size:16.5px;color:#2c21b4;letter-spacing:0.899px;">Identification</span>
<span class="t" style="left:408.54px;top:707.80px;font-size:14.3px;color:#5a5a5a;letter-spacing:0.836px;">linked from model gpt-4o</span>
<span class="t" style="left:1134.15px;top:693.08px;font-size:16.5px;color:#555;letter-spacing:0.518px;">Lumi Kajaste</span>
<span class="t" style="left:1373.74px;top:693.08px;font-size:16.5px;color:#444;letter-spacing:0.672px;">16 - High</span>
<span class="t" style="left:1500.91px;top:693.08px;font-size:16.5px;color:#444;letter-spacing:1.202px;">6 - Med</span>
<span class="t" style="left:1608.15px;top:693.08px;font-size:16.5px;color:#444;letter-spacing:0.781px;">Dec 2, 2025</span>
<span class="t" style="left:406.72px;top:751.28px;font-size:16.5px;color:#2c21b4;letter-spacing:0.657px;">Output variability</span>
<span class="t" style="left:1135.24px;top:751.08px;font-size:16.5px;color:#555;letter-spacing:0.603px;">Jonathan Nieminen</span>
<span class="t" style="left:1374.74px;top:751.08px;font-size:16.5px;color:#444;letter-spacing:0.742px;">12 - Med</span>
<span class="t" style="left:1502.17px;top:751.08px;font-size:16.5px;color:#444;letter-spacing:0.863px;">2 - Low</span>
<span class="t" style="left:1608.15px;top:751.08px;font-size:16.5px;color:#444;letter-spacing:0.781px;">Dec 8, 2025</span>
<span class="t" style="left:406.72px;top:802.28px;font-size:16.5px;color:#2c21b4;letter-spacing:0.708px;">Overly confident responses</span>
<span class="t" style="left:1135.24px;top:802.08px;font-size:16.5px;color:#555;letter-spacing:0.603px;">Jonathan Nieminen</span>
<span class="t" style="left:1374.74px;top:802.08px;font-size:16.5px;color:#444;letter-spacing:0.742px;">12 - Med</span>
<span class="t" style="left:1501.37px;top:802.08px;font-size:16.5px;color:#444;letter-spacing:1.126px;">4 - Med</span>
<span class="t" style="left:1608.15px;top:802.08px;font-size:16.5px;color:#444;letter-spacing:0.781px;">Dec 2, 2025</span>
<span class="t" style="left:405.98px;top:853.28px;font-size:16.5px;color:#2c21b4;letter-spacing:0.758px;">Infinite feedback loops</span>
<span class="t" style="left:1134.15px;top:853.08px;font-size:16.5px;color:#555;letter-spacing:0.518px;">Lumi Kajaste</span>
<span class="t" style="left:1374.74px;top:853.08px;font-size:16.5px;color:#444;letter-spacing:0.742px;">12 - Med</span>
<span class="t" style="left:1501.37px;top:853.08px;font-size:16.5px;color:#444;letter-spacing:1.126px;">4 - Med</span>
<span class="t" style="left:1608.72px;top:853.08px;font-size:16.5px;color:#444;letter-spacing:0.454px;">Oct 21, 2025</span>
<span class="t" style="left:408.15px;top:901.03px;font-size:16.5px;color:#2c21b4;letter-spacing:0.701px;">Data acquisition</span>
<span class="t" style="left:408.54px;top:925.80px;font-size:14.3px;color:#5a5a5a;letter-spacing:0.648px;">linked from dataset Investment preferences and risk profiles</span>
<span class="t" style="left:1134.15px;top:911.08px;font-size:16.5px;color:#555;letter-spacing:0.518px;">Lumi Kajaste</span>
<span class="t" style="left:1379.62px;top:911.08px;font-size:16.5px;color:#444;letter-spacing:1.084px;">4 - Med</span>
<span class="t" style="left:1502.17px;top:911.08px;font-size:16.5px;color:#444;letter-spacing:0.863px;">2 - Low</span>
<span class="t" style="left:1608.72px;top:911.08px;font-size:16.5px;color:#444;letter-spacing:0.454px;">Oct 21, 2025</span>
<span class="t" style="left:408.15px;top:966.03px;font-size:16.5px;color:#2c21b4;letter-spacing:0.750px;">Harmful or toxic content</span>
<span class="t" style="left:408.54px;top:990.80px;font-size:14.3px;color:#5a5a5a;letter-spacing:0.730px;">linked from product Acme Corp AI Services</span>
<span class="t" style="left:1135.24px;top:976.08px;font-size:16.5px;color:#555;letter-spacing:0.603px;">Jonathan Nieminen</span>
<span class="t" style="left:1374.74px;top:976.08px;font-size:16.5px;color:#444;letter-spacing:0.742px;">12 - Med</span>
<span class="t" style="left:1502.17px;top:976.08px;font-size:16.5px;color:#444;letter-spacing:0.863px;">2 - Low</span>
<span class="t" style="left:1609.24px;top:976.08px;font-size:16.5px;color:#444;letter-spacing:0.733px;">Jan 23, 2026</span>
</div>
</body></html>
